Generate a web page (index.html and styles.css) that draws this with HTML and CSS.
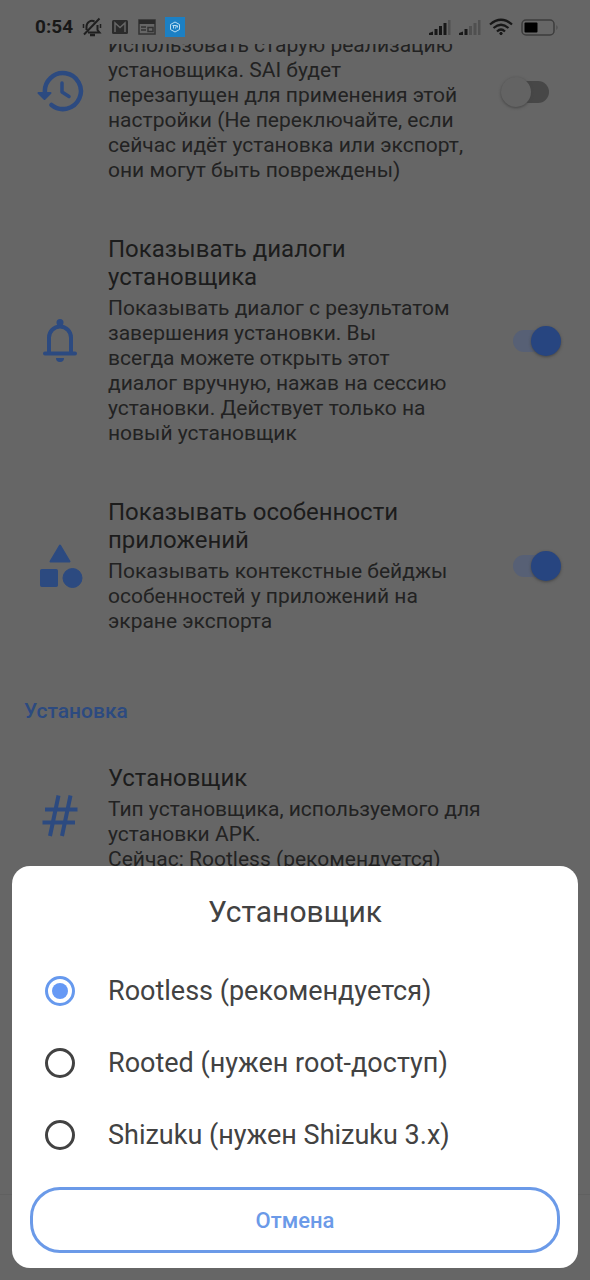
FILE: index.html
```html
<!DOCTYPE html>
<html lang="ru">
<head>
<meta charset="utf-8">
<meta name="viewport" content="width=device-width, initial-scale=1">
<title>Установщик</title>
<link rel="stylesheet" href="styles.css">
</head>
<body>
<header class="status">
  <div class="status-side">
    <span class="clock">0:54</span>
    <svg width="20" height="20" viewBox="0 0 20 20" fill="none" stroke="#1f1f1f" stroke-width="2">
      <path d="M4.500 13V9.500a5.500 5.500 0 0 1 8-5M15.500 8v5l2 2.500H6M17.500 1.500 2 17.500"/><path d="M8 18h5" stroke-width="2.500"/><path d="M1.500 7v4M18.500 7v4" stroke-width="1.500"/>
    </svg>
    <svg width="18" height="16" viewBox="0 0 18 16"><rect x="1" y="1" width="16" height="14" rx="1.500" fill="#2b2b2b"/><path d="M4 13V4l5 4.500L14 4v9" fill="none" stroke="#666" stroke-width="1.500"/></svg>
    <svg width="18" height="16" viewBox="0 0 18 16"><path d="M1 1h16v14H1z" fill="none" stroke="#333" stroke-width="1.500"/><path d="M1 1h16v4H1z" fill="#2b2b2b"/><path d="M3 8h5M3 11h5M10 8.500h5v4h-5z" fill="none" stroke="#333" stroke-width="1.500"/></svg>
    <svg width="20" height="20" viewBox="0 0 20 20"><rect width="20" height="20" fill="#1c80c4"/><path d="m10 5 4.500 2.500v5L10 15l-4.500-2.500v-5z" fill="none" stroke="#b9dcf2"/><path d="M7.500 8.500h4l-1 3M8.500 8.500v3M12.500 8.500v2" fill="none" stroke="#b9dcf2"/></svg>
  </div>
  <div class="status-side status-right">
    <svg width="22" height="17" viewBox="0 0 22 17"><path d="M0 16v-2l4-1.500V16zM5.500 16v-6h3v6zM10 16V7h3v9zM14.500 16V4h3v12z" fill="#181818"/><path d="M19 1h2.500v15H19z" fill="#505050"/></svg>
    <svg width="22" height="17" viewBox="0 0 22 17"><path d="M0 16v-2l4-1.500V16zM5.500 16v-6h3v6z" fill="#181818"/><path d="M10 16V7h3v9zM14.500 16V4h3v12zM19 1h2.500v15H19z" fill="#505050"/></svg>
    <svg width="24" height="18" viewBox="0 0 24 18" fill="none" stroke="#181818" stroke-width="2.200"><path d="M1 6.500Q12-3 23 6.500M4.500 10Q12 3.500 19.500 10M8 13.500q4-4 8 0"/><circle cx="12" cy="15.500" r="1.200" fill="#181818" stroke-width="1"/></svg>
    <svg width="38" height="17" viewBox="0 0 38 17"><rect x="1" y="1" width="32" height="15" rx="4" fill="none" stroke="#3d3d3d" stroke-width="1.500"/><rect x="3.500" y="3.500" width="13" height="10" rx="1" fill="#000"/><path d="M35.500 6q2 2.500 0 5z" fill="#444"/></svg>
  </div>
</header>

<main class="settings">
  <section class="row row-first">
    <svg width="48" height="48" viewBox="0 0 48 48" fill="none" stroke="#2c4a80" stroke-width="4.500" stroke-linecap="round" stroke-linejoin="round">
      <path d="M9 25A18 18 0 1 1 15.500 37"/><path d="M26 15v9l7 4.500" stroke-width="3.500"/><path d="m2.500 25 6 6 6-6z" fill="#2c4a80" stroke-width="2"/>
    </svg>
    <div class="text">
      <p class="summary">Использовать старую реализацию<br>установщика. SAI будет<br>перезапущен для применения этой<br>настройки (Не переключайте, если<br>сейчас идёт установка или экспорт,<br>они могут быть повреждены)</p>
    </div>
    <input class="switch" type="checkbox" aria-label="Использовать старую реализацию установщика">
  </section>
  <section class="row">
    <svg width="48" height="48" viewBox="0 0 48 48" fill="none" stroke="#2c4a80" stroke-width="4" stroke-linecap="round" stroke-linejoin="round">
      <path d="M9 36.500h30M13 36V20.500a11 11 0 0 1 22 0V36" /><circle cx="24" cy="5.500" r="3.500" fill="#2c4a80" stroke="none"/><path d="M20 41h8a4 4 0 0 1-8 0z" fill="#2c4a80" stroke="none"/>
    </svg>
    <div class="text">
      <label class="title" for="dialogs">Показывать диалоги<br>установщика</label>
      <p class="summary">Показывать диалог с результатом<br>завершения установки. Вы<br>всегда можете открыть этот<br>диалог вручную, нажав на сессию<br>установки. Действует только на<br>новый установщик</p>
    </div>
    <input class="switch" type="checkbox" id="dialogs" checked>
  </section>
  <section class="row">
    <svg width="48" height="48" viewBox="0 0 48 48" fill="#2c4a80" stroke="#2c4a80" stroke-linejoin="round">
      <path d="m24 3.500 9.500 16h-19z" stroke-width="2"/><rect x="4.500" y="27.500" width="17" height="17" rx="1"/><circle cx="36.500" cy="36" r="9.500"/>
    </svg>
    <div class="text">
      <label class="title" for="features">Показывать особенности<br>приложений</label>
      <p class="summary">Показывать контекстные бейджы<br>особенностей у приложений на<br>экране экспорта</p>
    </div>
    <input class="switch" type="checkbox" id="features" checked>
  </section>
  <h2 class="section-name">Установка</h2>
  <section class="row row-wide">
    <svg width="48" height="48" viewBox="0 0 48 48" fill="none" stroke="#2c4a80" stroke-width="4">
      <path d="M22.500 1.500 14 42M34.500 1.500 26 42M9 15.500h32.500M6.500 28.500H39"/>
    </svg>
    <div class="text">
      <h3 class="title">Установщик</h3>
      <p class="summary">Тип установщика, используемого для<br>установки APK.<br>Сейчас: Rootless (рекомендуется)</p>
    </div>
  </section>
</main>
<div class="bottom-bar"></div>

<form class="dialog" role="dialog" aria-labelledby="dialog-title">
  <h1 class="dialog-title" id="dialog-title">Установщик</h1>
  <div class="options">
    <label class="option"><input class="radio" type="radio" name="installer" checked>Rootless (рекомендуется)</label>
    <label class="option"><input class="radio" type="radio" name="installer">Rooted (нужен root-доступ)</label>
    <label class="option"><input class="radio" type="radio" name="installer">Shizuku (нужен Shizuku 3.x)</label>
  </div>
  <button class="cancel" type="button">Отмена</button>
</form>
</body>
</html>
```

FILE: styles.css
```css
* {
  box-sizing: border-box;
}

body {
  margin: 0;
  height: 100vh;
  overflow: hidden;
  background: #666;
  color: #1c1c1c;
  font-family: Roboto, "Noto Sans", sans-serif;
}

h1, h2, h3, p {
  margin: 0;
}

.status {
  position: fixed;
  inset: 0 0 auto;
  z-index: 1;
  display: flex;
  justify-content: space-between;
  align-items: center;
  height: 44px;
  padding: 10px 31px 0 35px;
  background: #666;
}

.status-side {
  display: flex;
  align-items: center;
  gap: 9px;
}

.status-right {
  gap: 8px;
}

.clock {
  font-size: 19px;
  line-height: 24px;
  font-weight: 700;
  color: #181818;
}

.row {
  display: grid;
  grid-template-columns: 48px 1fr 36px;
  column-gap: 24px;
  align-items: center;
  padding: 26px 41px 26px 36px;
}

.row-first {
  padding-top: 0;
}

.row-first .text {
  padding-top: 33px;
}

.row-wide {
  grid-template-columns: 48px 1fr;
}

.text {
  white-space: nowrap;
}

.title {
  display: block;
  margin-bottom: 5px;
  font-size: 24px;
  line-height: 28px;
  font-weight: 400;
}

.summary {
  font-size: 21px;
  line-height: 25px;
  color: #222;
}

.section-name {
  padding: 37px 24px 13px;
  font-size: 21px;
  line-height: 28px;
  font-weight: 500;
  color: #2c4a80;
}

.switch {
  appearance: none;
  position: relative;
  width: 36px;
  height: 22px;
  margin: 0;
  border-radius: 11px;
  background: #474747;
}

.switch::before {
  content: "";
  position: absolute;
  top: -4px;
  left: -12px;
  width: 30px;
  height: 30px;
  border-radius: 50%;
  background: #636363;
  box-shadow: 0 1px 3px #444;
}

.switch:checked {
  background: #576075;
}

.switch:checked::before {
  left: 18px;
  background: #274580;
}

.bottom-bar {
  position: fixed;
  inset: auto 0 0;
  height: 86px;
  border-top: 1px solid #606060;
  background: #666;
}

.dialog {
  position: fixed;
  inset: auto 12px 12px;
  z-index: 2;
  padding: 28px 18px 15px;
  border-radius: 18px;
  background: #fff;
  color: #424242;
}

.dialog-title {
  margin-bottom: 25px;
  font-size: 30px;
  line-height: 36px;
  font-weight: 400;
  text-align: center;
}

.option {
  display: flex;
  align-items: center;
  gap: 33px;
  height: 72px;
  padding-left: 15px;
  font-size: 27px;
}

.radio {
  appearance: none;
  display: grid;
  place-items: center;
  width: 30px;
  height: 30px;
  margin: 0;
  border: 3px solid #424242;
  border-radius: 50%;
}

.radio:checked {
  border-color: #6699ee;
}

.radio:checked::before {
  content: "";
  width: 16px;
  height: 16px;
  border-radius: 50%;
  background: #6699f5;
}

.cancel {
  display: block;
  width: 100%;
  height: 66px;
  margin-top: 16px;
  border: 3px solid #6b9ae8;
  border-radius: 30px;
  background: #fff;
  color: #6b9ae8;
  font-family: inherit;
  font-size: 22px;
  font-weight: 500;
}
```
